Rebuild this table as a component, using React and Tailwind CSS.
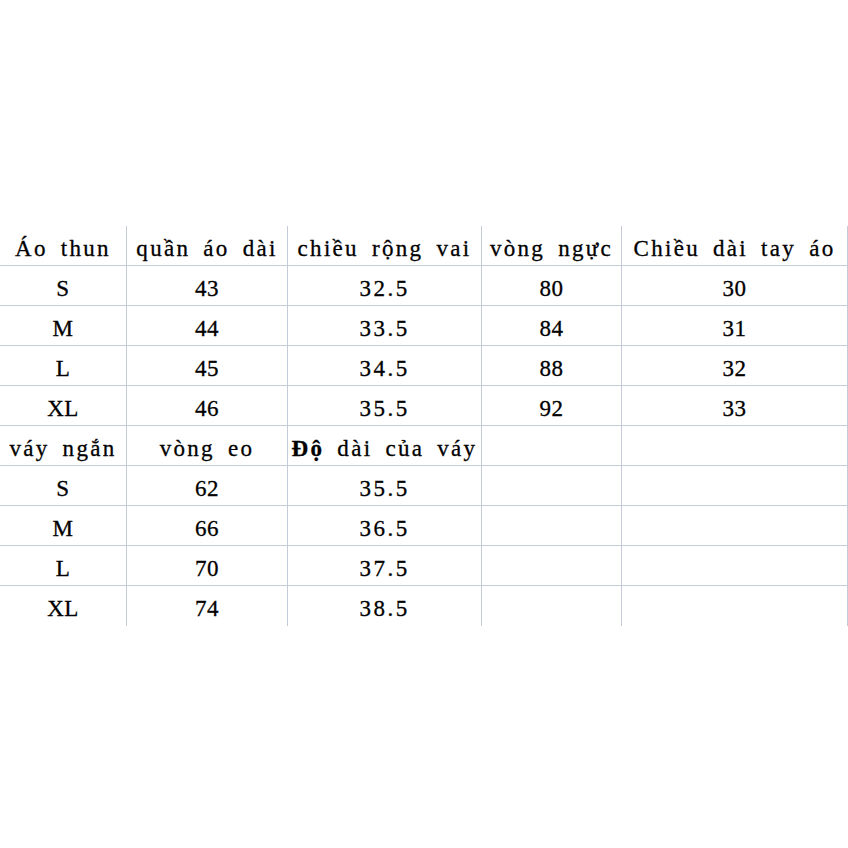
import React from 'react';

const cols = ['w-[127px]', 'w-[161px]', 'w-[194px]', 'w-[140px]', 'w-[226px]'];

const rows = [
    { head: true, cells: ['Áo thun', 'quần áo dài', 'chiều rộng vai', 'vòng ngực', 'Chiều dài tay áo'] },
    { cells: ['S', '43', '32.5', '80', '30'] },
    { cells: ['M', '44', '33.5', '84', '31'] },
    { cells: ['L', '45', '34.5', '88', '32'] },
    { cells: ['XL', '46', '35.5', '92', '33'] },
    { head: true, cells: ['váy ngắn', 'vòng eo', 'Độ dài của váy', '', ''] },
    { cells: ['S', '62', '35.5', '', ''] },
    { cells: ['M', '66', '36.5', '', ''] },
    { cells: ['L', '70', '37.5', '', ''] },
    { cells: ['XL', '74', '38.5', '', ''] },
];

function Cell({ text, width, head }) {
    const bold = text.startsWith('Độ');
    return (
        <div className={`${width} h-full flex items-center justify-center border-r border-[#c5cad8] pt-[7px]`}>
            {bold ? (
                <span className="tracking-[2.3px] [word-spacing:5px] whitespace-pre">
                    <span className="font-bold">Độ</span>{text.slice(2)}
                </span>
            ) : (
                <span className={`${head ? 'tracking-[2.3px] [word-spacing:5px]' : text.includes('.') ? 'tracking-[2.5px]' : 'tracking-[0.5px]'} whitespace-pre`}>
                    {text}
                </span>
            )}
        </div>
    );
}

export default function App() {
    return (
        <div className="w-[848px] h-[848px] bg-white pt-[226px] text-black text-[23px] font-['Liberation_Serif',serif] [-webkit-text-stroke:0.3px_black]">
            {rows.map((row, i) => (
                <div
                    key={i}
                    className={`flex h-[40px] ${i < rows.length - 1 ? 'border-b border-[#c5cad8]' : ''}`}
                >
                    {row.cells.map((c, j) => (
                        <Cell key={j} text={c} width={cols[j]} head={row.head} />
                    ))}
                </div>
            ))}
        </div>
    );
}
